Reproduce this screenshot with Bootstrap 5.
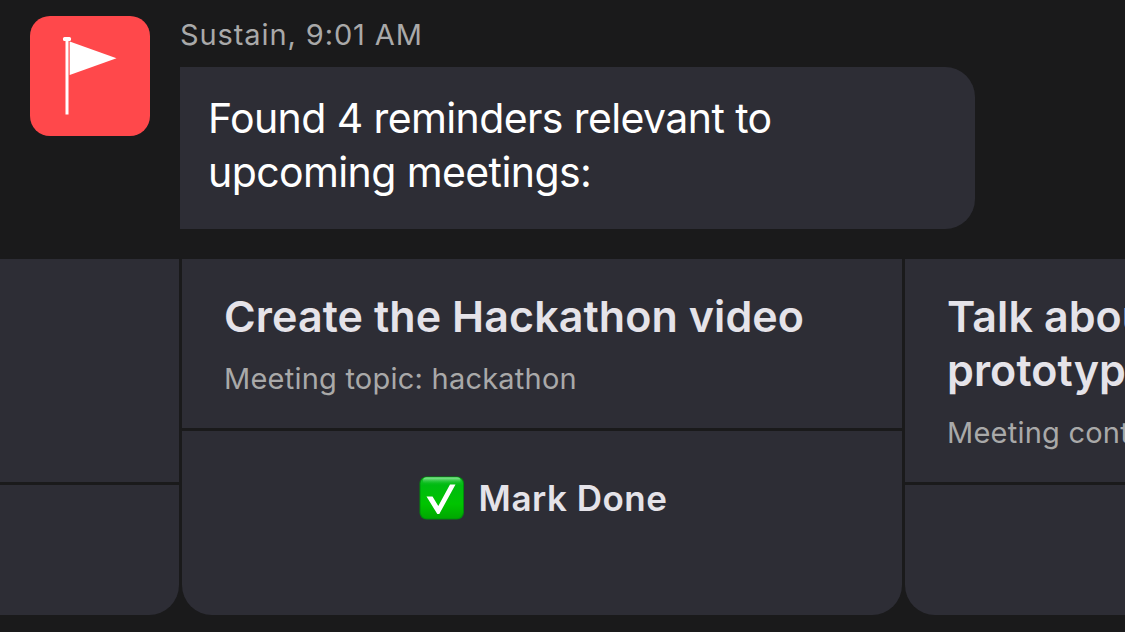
<!DOCTYPE html>
<html lang="en">
<head>
    <meta charset="UTF-8">
    <meta name="viewport" content="width=device-width, initial-scale=1.0">
    <title>Sustain</title>
    <!-- Bootstrap CSS -->
    <link href="https://cdn.jsdelivr.net/npm/bootstrap@5.3.0/dist/css/bootstrap.min.css" rel="stylesheet">
    <style>
        body {
            background-color: #1a1a1b;
            color: #e5e3e9;
            font-family: Inter, "Liberation Sans", sans-serif;
            height: 632px;
        }
        .message {
            padding: 16px 30px 0;
            gap: 30px;
            height: 229px;
        }
        .avatar {
            width: 120px;
            height: 120px;
            border-radius: 20px;
            background-color: #ff484b;
        }
        .sender {
            height: 51px;
            font-size: 29px;
            line-height: 38px;
            letter-spacing: 0.9px;
            color: #a9a9a9;
        }
        .bubble {
            width: 795px;
            height: 162px;
            padding: 24px 28px;
            border-radius: 0 30px 30px 0;
            background-color: #2d2d35;
            color: #fff;
            font-size: 41px;
            line-height: 54px;
            letter-spacing: -0.6px;
        }
        .carousel-strip {
            margin-top: 30px;
            padding-right: 41px;
            gap: 3px;
            height: 356px;
        }
        .reminder {
            width: 720px;
            gap: 3px;
            border-radius: 0 0 30px 30px;
            overflow: hidden;
        }
        .reminder-info,
        .reminder-action {
            background-color: #2d2d35;
        }
        .reminder-info {
            height: 169px;
            padding: 30px 42px 0;
        }
        .reminder-info.tall {
            height: 223px;
        }
        .reminder-title {
            margin: 0;
            font-size: 43px;
            font-weight: 600;
            line-height: 54px;
            letter-spacing: 0.08px;
        }
        .reminder-topic {
            margin: 17px 0 0;
            font-size: 29px;
            line-height: 38px;
            letter-spacing: 0.23px;
            color: #a9a9a9;
        }
        .reminder-action {
            padding-top: 44px;
            gap: 14px;
            font-size: 35px;
            font-weight: 600;
            line-height: 46px;
            letter-spacing: 0.5px;
        }
        .reminder-action svg {
            margin-left: 2px;
        }
    </style>
</head>
<body class="overflow-hidden">
    <div class="message d-flex align-items-start">
        <svg class="avatar flex-shrink-0" viewBox="0 0 120 120">
            <rect x="35.5" y="22" width="3" height="76.5" fill="#fff"/>
            <rect x="33" y="21" width="8" height="4" rx="1.5" fill="#fff"/>
            <path d="M39.7 25.5 L86.5 42.3 L39.7 59 Z" fill="#fff"/>
        </svg>
        <div>
            <div class="sender">Sustain, 9:01 AM</div>
            <div class="bubble">Found 4 reminders relevant to<br>upcoming meetings:</div>
        </div>
    </div>

    <!-- Reminder cards, centered on the current one -->
    <div class="carousel-strip d-flex justify-content-center overflow-hidden">
        <div class="reminder d-flex flex-column flex-shrink-0">
            <div class="reminder-info tall"></div>
            <div class="reminder-action flex-grow-1"></div>
        </div>
        <div class="reminder d-flex flex-column flex-shrink-0">
            <div class="reminder-info">
                <h2 class="reminder-title">Create the Hackathon video</h2>
                <p class="reminder-topic">Meeting topic: hackathon</p>
            </div>
            <div class="reminder-action d-flex justify-content-center align-items-start flex-grow-1">
                <svg width="46" height="46" viewBox="0 0 46 46">
                    <defs>
                        <linearGradient id="tickGreen" x1="0" y1="0" x2="0" y2="1">
                            <stop offset="0" stop-color="#21c534"/>
                            <stop offset="0.2" stop-color="#00bb10"/>
                            <stop offset="0.65" stop-color="#00c400"/>
                            <stop offset="1" stop-color="#00a800"/>
                        </linearGradient>
                        <linearGradient id="tickShine" x1="0" y1="0" x2="0" y2="1">
                            <stop offset="0" stop-color="#8fe59c"/>
                            <stop offset="1" stop-color="#1cc030" stop-opacity="0"/>
                        </linearGradient>
                    </defs>
                    <rect x="0.5" y="1.5" width="44.5" height="43" rx="7" fill="#008c0c"/>
                    <rect x="1.5" y="2" width="42.5" height="41.5" rx="6.5" fill="url(#tickGreen)"/>
                    <rect x="4" y="2.5" width="37.5" height="6.5" rx="3.2" fill="url(#tickShine)"/>
                    <path d="M7.5 21.5 L13.5 21.5 L19.3 31 L31 9.5 L36.5 9.5 L20.3 39 L18.3 39 Z" fill="#fff"/>
                </svg>
                <span>Mark Done</span>
            </div>
        </div>
        <div class="reminder d-flex flex-column flex-shrink-0">
            <div class="reminder-info tall">
                <h2 class="reminder-title">Talk about<br>prototype</h2>
                <p class="reminder-topic">Meeting content</p>
            </div>
            <div class="reminder-action flex-grow-1"></div>
        </div>
    </div>

    <!-- Bootstrap JS and dependencies -->
    <script src="https://cdn.jsdelivr.net/npm/bootstrap@5.3.0/dist/js/bootstrap.bundle.min.js"></script>
</body>
</html>
